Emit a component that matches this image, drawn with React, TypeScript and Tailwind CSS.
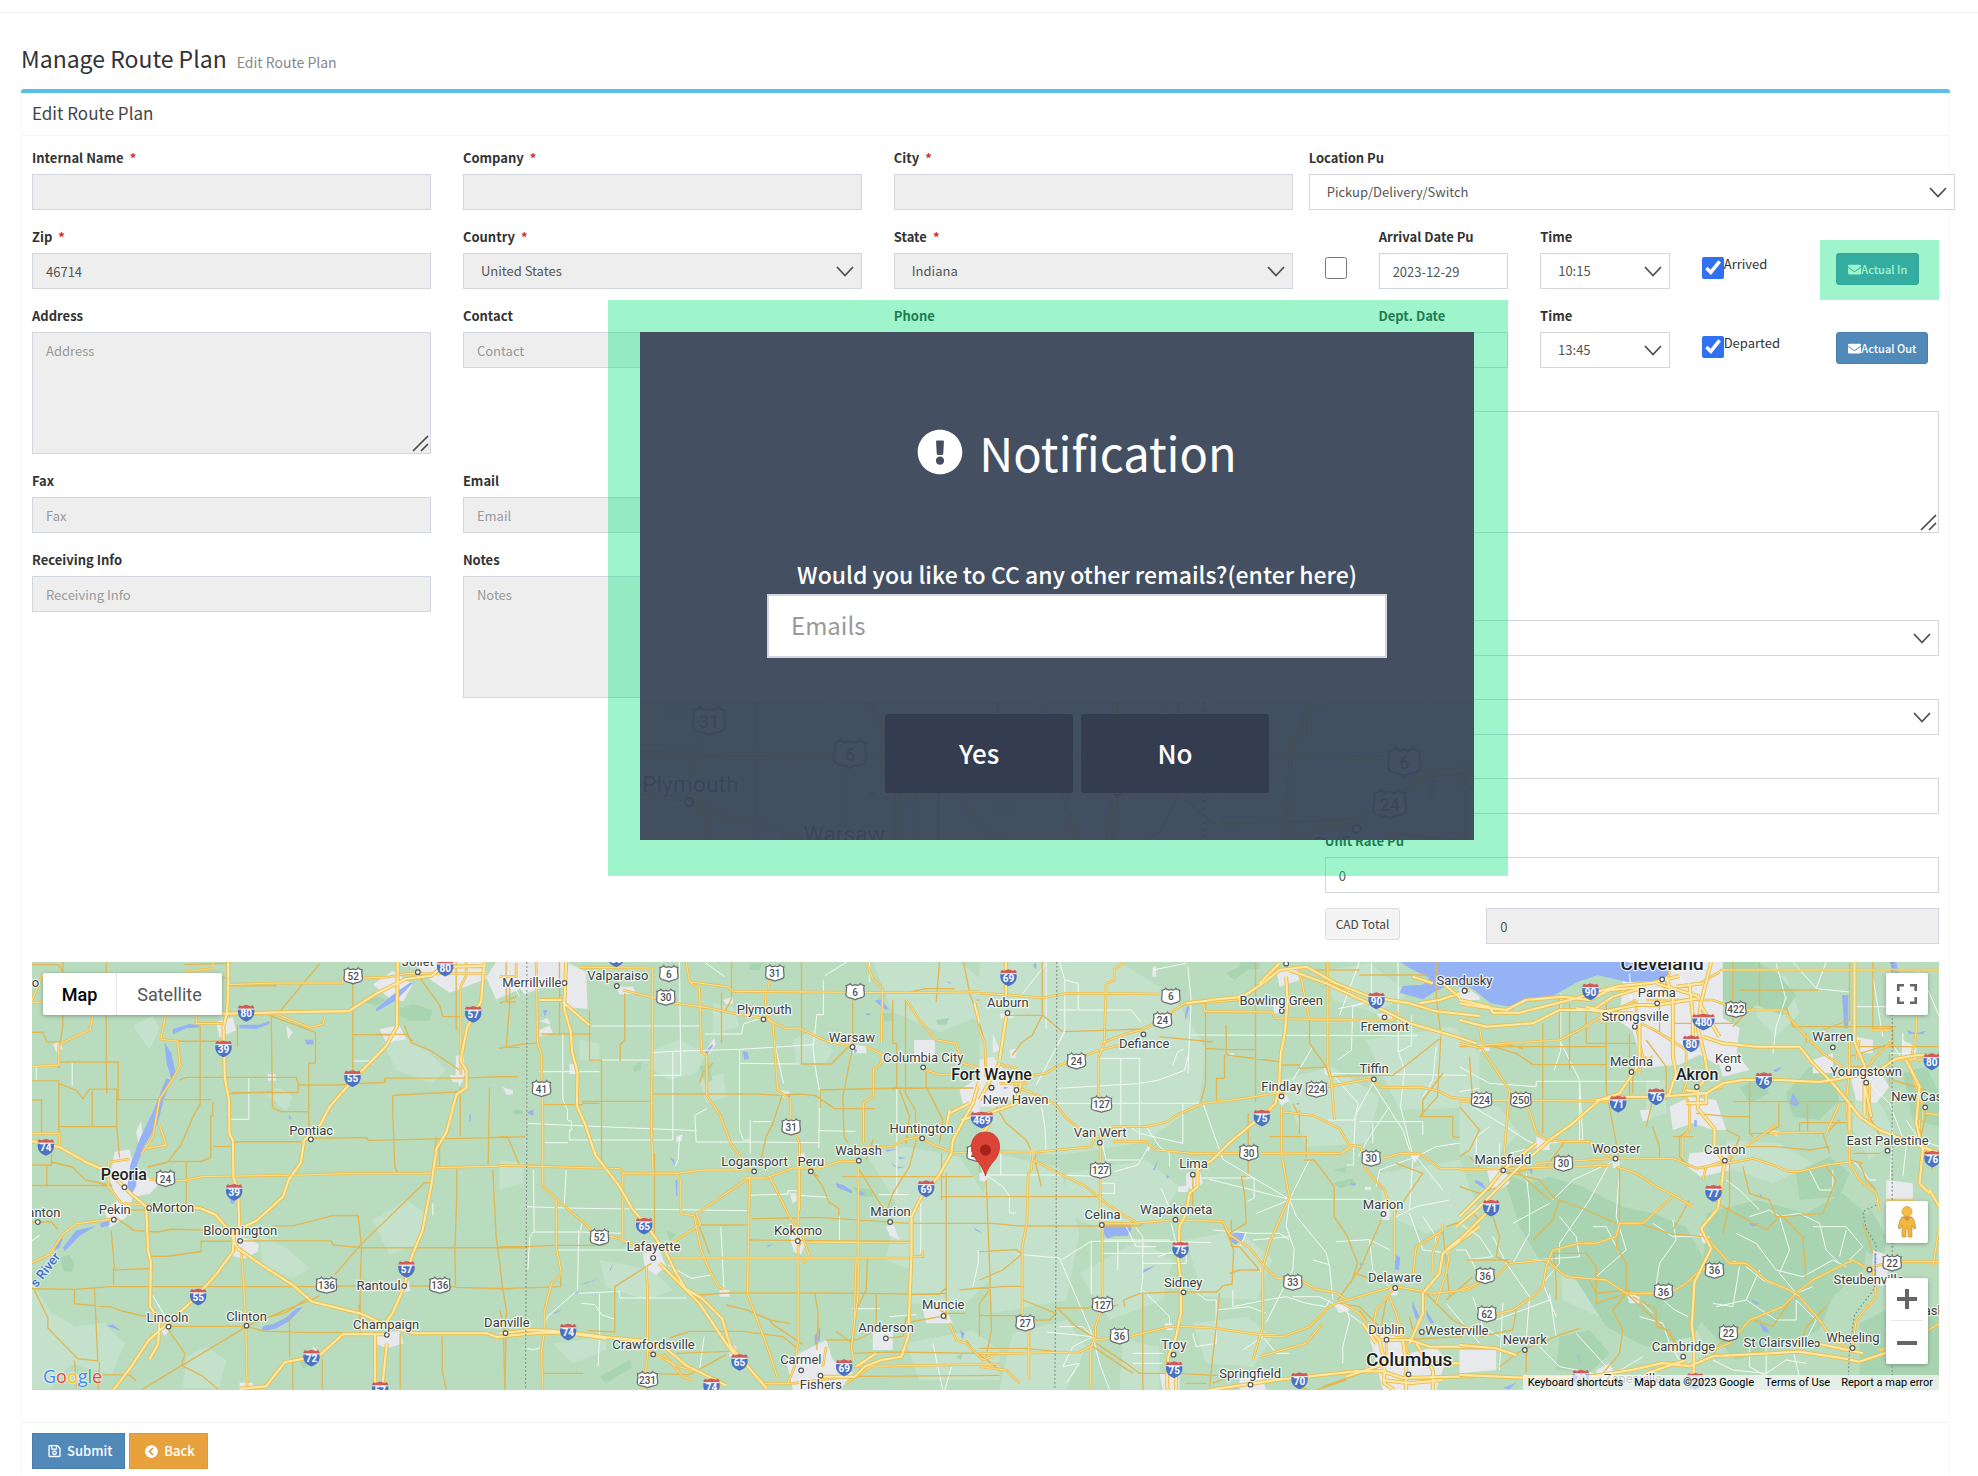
import React from 'react';
import { FaEnvelope, FaRegSave, FaChevronCircleLeft, FaExclamationCircle } from 'react-icons/fa';

const controlClass = 'block w-full border border-[#d2d6de] text-[13px] leading-5 text-[#555] placeholder:text-[#999] outline-none rounded-none';

interface FieldProps {
  id: string;
  label: string;
  required?: boolean;
  children: React.ReactNode;
}

const Field: React.FC<FieldProps> = ({ id, label, required, children }) => (
  <div className="mb-[15px]">
    <label htmlFor={id} className="block h-6 mb-1 text-[13px] leading-6 font-bold text-[#333] whitespace-nowrap">
      {label}
      {required && <span className="ml-[6px] text-[#c9302c]">*</span>}
    </label>
    {children}
  </div>
);

interface TextInputProps {
  id: string;
  value?: string;
  placeholder?: string;
  disabled?: boolean;
}

const TextInput: React.FC<TextInputProps> = ({ id, value, placeholder, disabled }) => (
  <input
    id={id}
    type="text"
    defaultValue={value}
    placeholder={placeholder}
    readOnly={disabled}
    className={`${controlClass} h-9 px-[13px] ${disabled ? 'bg-[#eee]' : 'bg-white'}`}
  />
);

const Select: React.FC<{ id: string; options: string[]; disabled?: boolean }> = ({ id, options, disabled }) => (
  <div className="relative">
    <select id={id} className={`${controlClass} h-9 appearance-none pl-[17px] pr-8 ${disabled ? 'bg-[#eee]' : 'bg-white'}`}>
      {options.map(option => (
        <option key={option}>{option}</option>
      ))}
    </select>
    <svg className="absolute right-2 top-[13px] w-[18px] h-[11px] pointer-events-none" viewBox="0 0 18 11" fill="none" stroke="#505050" strokeWidth="1.8">
      <path d="M1 1l8 8.5L17 1" />
    </svg>
  </div>
);

const TextArea: React.FC<TextInputProps> = ({ id, placeholder, disabled }) => (
  <div className="relative">
    <textarea
      id={id}
      placeholder={placeholder}
      readOnly={disabled}
      className={`${controlClass} h-[122px] resize-none px-[13px] py-2 ${disabled ? 'bg-[#eee]' : 'bg-white'}`}
    />
    <svg className="absolute right-[2px] bottom-[2px] w-[17px] h-[17px] pointer-events-none" viewBox="0 0 17 17" stroke="#444" strokeWidth="1.6">
      <path d="M1 16L16 1M9 16l7-7" />
    </svg>
  </div>
);

// ---- map data -------------------------------------------------------------
// Every tile keeps its own grid, `x`/`y` is its corner on the map and `sx`/`sy` the grid scale.
type Label = [text: string, x: number, y: number, size?: 'md' | 'lg'];
type Point = [x: number, y: number];

interface Tile {
  x: number;
  y: number;
  sx: number;
  sy: number;
  dark: string;
  light: string;
  urban: string;
  water: string;
  white: string;
  minor: string;
  medium: string;
  major: string;
  border: string;
  labels: Label[];
  dots: Point[];
  interstates: Label[];
  highways: Label[];
}

const tiles: Tile[] = [
  {
    x: -32, y: -22, sx: 1 / 3, sy: 1 / 2.925,
    dark: 'M1200 200l40-12 30 8 30 10-10 30-60 0-30-14zM180 930l30-10 15 30-10 22-22-4zM900 1235l30-8 5 14-25 12zM1090 180l40-16 30 10-30 20z',
    light: 'M96 1000l60 90 70 40 90-10 60 60-40 90-120-30-60 70-60 6zM560 1220l60-30 60 40-20 80h-110zM1150 300l60-20 70 40 60 60-40 40-110-40zM400 250l60-30 20 40-30 60zM780 860l80 40 70 60-50 30-90-40zM1120 820l100-60 60 40-20 90-90 30zM800 450l40-20 40 30-20 40z',
    urban: 'M345 620l45-8 10 40 40 40 40 20-30 30-50 10-20 60-50 30-15-50 40-30-25-60zM700 860l60 20 18 10-4 22-40 20-40-10zM1130 1150l70-6 12 36-50 14-30-12zM1120 130l60-40 60 40-30 50-40-10zM1240 64h220v50l-110 40-60-40zM1370 340l20-10 10 60-20 40-12-40zM1460 110l30-46h70v80l-70 30zM160 305l20-8 10 20-20 10zM805 392h24v20h-24zM650 240l50-15 10 40-50 20zM860 250l20 20-14 20zM1140 260l60-10 20 40-60 10zM1200 1000l28-4 4 30-24 6zM480 1140l24-20 10 14-18 24zM410 560l14-30 6 40-14 24zM720 1295h40v20h-40zM1350 395l30 0 10 20-30 0zM1510 430l30 10 0 12-20 0z',
    water: 'M495 300l20 30 14 60-12 20-16-50zM500 405l16 4-24 60-18 70-38 60-24 60-2 60-16 30-10-30 8-60 30-80 40-80zM520 260l50-14 30 4 0 6-40 2-40 18zM720 248l60 0 30-12 0 10-40 14-50-2zM916 292l26 0 0 14-20 0zM1130 200l50-40 50-34 10 0-50 50-60 34zM170 880l20-10-10 30-16 8zM190 900l40-50 60-14-50 30-44 44zM300 830l30-10 0 14-24 8zM790 1130l30-6 40-20 30-26 20-4-40 40-40 22-30 6-14 0zM320 1130l20-6 24 20-24-10zM692 755l16 0-4 16-10 0zM870 510l6 14-8 0zM1410 510h4v20h-4z',
    white: 'M218 360v66M110 370v40M748 402v122H690M1060 354h50l20-20M460 1040l36 60M96 880l24-16M1300 770v36M940 1190l14 16M1195 170v110l-70 60',
    minor: 'M96 72h80l20 30M320 64V350l2 100M96 270h34l12 28h40M190 64v190l-10 60-2 60M96 412h82v154M178 357h160l-6 0h24v110h280M96 468h30v100M180 420l50 20 20 24 20-28h82M278 440v106h-98M178 546h172M352 436v110l8 90M96 658h60v-38M96 718h240M142 660v60M158 650l60 14 40 38 80 16M602 250v230l-18 30-40 90-40 50-60 14M540 410l20-8h330l6 18v26H696M896 424h110l150-8 0-12h230l110-4 60 0M640 474v40h-6v122l-30 12-100 0M640 604h60M704 590l200 0M928 576V360h20V270l-140-50M940 580l160-2 8 8 470-10M1060 110v320M1060 276l110 2M1130 276h90l20 20M1215 250l20 50 60 24 90 60M1260 110l30 40 30 40 10 34h60M1340 224h40M1370 64v200M1382 430v144M1180 454l200-10M1180 454v60l6 150 10 20M690 450l130-6M815 210l4 280 26 12h84M714 250v64M828 136v-10h200M830 134H690M840 210l120-140M555 72l140-4M550 110h140M525 296h145M1530 64v130l-10 120h40M1470 430l-4 226M1310 576l-10 90M1320 580v90M1480 670l10 200 10 70 8 70 14 80-10 60 4 160M1372 670v80l-6 160 2 100M1368 1016l150 4 20 0M96 1020l130 2 110-8h620M1010 1012h70M1230 1012h60M1350 1014h20M225 1020v44l110 10 36 12 70 16 10-6M342 960v50M345 965l110-4M335 850l10 110M345 810l60 40 70 4 40-8 170 4M370 790h70M455 925h50l100-14v-30h90M730 880h265l6 12 84 8 280 0h220M820 836h60l120-30h70l6 0 10 90-4 120 0 130-4-80M1085 890l-80 90M1085 890l190-180h20M560 650v145M560 712v-14M96 825h60l20 22M105 1025l40 80 0 30 50 50 40 40 60 6-10-210M225 1230l6 80M300 1235l-4 80M310 1272h80l20 18M510 1130h230l200-80 20-10M500 1130l56 80-10 34 60 30 50 40M556 1240l180-106M740 1130l50 14 130 4h110M870 1100l0 50 0 70M880 1235v80M968 1225v90M1202 1150v165M1328 1160v100l12 54M560 1236l-140 84M780 1110l80-20 60-40M1385 280l0 0M1390 1270',
    medium: 'M725 900l8 120 6 100 4 190M130 100l-34 80M96 182l34 0M96 370l82-4v-60l94-44 10-50M96 566h84v40M500 210l-16 80 50 6 8 70-22 40-40 60-20 110-34 50M480 540l20 60-60 10M96 944l54-24 40-60 40-30 110-14M326 650l0 70 40 50 60 4 60 14M330 650l60-10M450 700l100 4 60-12 270-4 190-6h220l20-16 250-6M690 130l140-4 200 0 0-12 140-6 50-10 240 0M670 220l160-4 100 40 40-10 6-20M590 210v34h80M1400 64v40l-16 30v260M640 64v20l-80 8',
    major: 'M686 64v100l-4 50-10 40 4 150 12 60 2 104 10 18 2 110 14 40 4 120M668 216l150-4 230-4 80-50 90-44 80-10 30-26 130-2M1195 64l-3 190-32 56-80 80-40 42-50 56-26 50-50 48-10 66-36 48-18 52-34 30-46 40-66 30-4 60-50 66-66 72-60 54-76 66-50 74-62 80M96 588l84 18 80 44 70 30 66 64 44 36 160 4 46 18 44 48 24 52 90 60 74 46 60 50 150 36 74 34 80 22h220l30 12 60-10M1455 64l-10 116-42 76-20 96 18 30 0 50-30 20-30 110-30 48-16 110-26 130-34 80-20 82-36 80-30 40M1127 1150v164M1162 1180l-14 134M1160 1153h-130l-70 62-104 20-56 70-80 8M440 780l6 130 8 30-2 132 28 40-4 70-26 44',
    border: '',
    labels: [['Joliet', 1255, 77], ['Pontiac', 935, 569], ['Peoria', 373, 702, 'md'], ['Pekin', 346, 802], ['Morton', 521, 797], ['Bloomington', 722, 863], ['anton', 133, 809], ['Rantoul', 1137, 1025], ['Lincoln', 504, 1116], ['Clinton', 741, 1113], ['Champaign', 1160, 1138], ['o', 108, 138]],
    dots: [[1255, 94], [934, 583], [375, 723], [343, 818], [449, 784], [722, 880], [115, 825], [1214, 1012], [507, 1131], [741, 1128], [1162, 1155], [1518, 1150]],
    interstates: [['80', 1337, 82], ['57', 1421, 217], ['80', 740, 214], ['39', 672, 318], ['55', 1059, 405], ['74', 139, 606], ['39', 704, 738], ['57', 1221, 963], ['55', 596, 1044], ['72', 936, 1223], ['57', 1142, 1316]],
    highways: [['52', 1061, 105], ['24', 498, 698], ['136', 981, 1010], ['136', 1321, 1010]],
  },
  {
    x: 468, y: -22, sx: 1 / 3, sy: 1 / 3,
    dark: 'M600 380l30-10 8 50-20 14zM1310 240l40-6-10 20-24 0zM1150 220l30 0 0 24-24 0zM60 140l40-70 20 20-10 60-50 10zM40 510h30v12H40zM400 380l24-14 0 24-20 6zM300 1310l90-50 10 20-80 50zM500 870l30 14-20 20zM1370 1250l20-10-6 20zM1060 740l60 10 0 20-40 0zM750 70h40l-10 20h-30z',
    light: 'M460 330l80-30 80 40-30 60-80 20-50-30zM240 300l60 10 0 50-60 0zM1120 66h260l100 80 20 120-80-30-100 40-140-60zM1100 640l120-20 160 30 80 120-60 180-110 60-130-50 30-170zM1250 860l180-60 60 200-100 100-160-10zM1220 1210l200-40 80 60v90h-240zM880 300l60-30 60 60-20 40-90 0zM640 190l60 10 20 60-80 20zM600 420l70-20 10 70-60 20zM160 1210l160-20 0 40-100 40zM0 660l70 10v60l-70 20zM300 960l160 30 60 60-80 30-120-40z',
    urban: 'M0 66h200l60 30 4 110-60-4-10-60-60 0-60 20-34-40-40-10zM120 270l30-14 10 24-40 10zM120 244l24-10 10 20zM210 372h20v30h-20zM350 140l50 0 10 20-50 4zM1244 300h62v60h-62zM1380 450l60-40 20-60 40-8v120l-70 60-40-30zM430 940l50-10 20 50-30 24-34-20zM870 890l40-10 8 30-14 34-20-8zM1160 860l20-10 20 50-30-14zM1270 1110l60-20 30 60-80 0zM1120 1180l60-10 0 60-60 0zM860 1260l120-60 20 60 60 40-40 50h-140zM690 1210l20 10 4 30-24 0zM1440 700l24-6 4 30-24 0zM1050 310l50 10 0 20-40 0zM840 450l30 6-10 20-20-10zM620 330l24-36 4 20-20 30zM660 1050l30 0 0 20-30 0zM530 590l20-8-4 20-16 4zM670 180l30-10 0 20-20 4zM900 640l16 0 0 30-16 0zM870 760l20 0 6 20-16 10zM1020 160z',
    water: 'M130 210h14l-8 20zM618 334l18-20 6 0-20 32zM730 334l14 2 4 20-14 4zM1125 182l20-4 22 28-8 4zM1060 318l14 14-8 8zM82 518l20-10 0 20zM510 650l14 10 4 20zM528 720l6 0 0 48-4 0zM1010 730l20 4 30 20-4 6-44-18zM1070 748l30 14-20 4zM1382 1170l14 10-8 20zM945 1190l18-30-2 40-14 16zM220 1060l16-12-4 12zM240 1035l60-20-40 16zM160 1120l30-14-20 14zM1160 630l40-4-40 10zM1196 650l24 4-20 4zM1420 860l30 20-20-8zM860 460l14 8-6 6zM1100 220h12v6h-12zM1340 122l18 8-10 0zM330 990l10-20-6 20zM802 916l20-4-16 8zM1170 660l16 20 30 0-20 6zM502 1160l-8 30',
    white: 'M190 280v200l14 30v30l12 4v26h-6l0 30h310l0 0V334M82 550l130 6 380 16M135 608l70 0M590 606l170 0M540 66l4 340-90 0M456 338l66-4 200-6 130-8 90-6 10-90 20 0V120M616 282h110l6-30 60-20M720 330v240l12 30 20 0M720 370l180 2M760 545l54 0M752 540v100M760 606l198 2M975 108l110-70M615 66l60 44M940 314l6 60 14 80-2 170M958 572l110 2M1192 445v320M1138 764h90M1264 780v160M822 280l10 60 20 90M200 690l-6 108M102 690l2 184M82 800l120 4 120 2 420 6M745 766l120-4 0-10 26 0 6 14 90 6M85 990l6-100 10-14h145l124 4M238 870l-4 180-90 80-10 26M240 1060l120-6 0 20h200M456 930h-280M300 1060v130l-4 90M246 1090l40 4 20 30 40 14M82 1225l20 4 20-6M600 1290l14-100M664 860l10 200M505 975l70 40 60-10M1056 1106h86M1436 930l0 40-16 70M1020 830l0 80M590 606l-4-80 36-20M540 590l-4 70-10 20M1300 1210l30 140M1110 66v60M1466 66v80M270 360h180M120 395h180M276 258h330M1170 1130l80-6M1356 1280l-20 70M20 90l40 80M246 850l-2 20',
    minor: 'M0 325l60-12 60-4M270 210v150h36v320M456 462h320l60 4 60-4 50 4 60 40 120 0M300 490h-50v-6h200M130 494h120M124 282h150M180 66v220M376 160v140l-14 14v50M666 160l0 150M696 66l0 110-20 40M780 680l20-90 20-40 30-90M600 430l10-30 30-30M1180 180v130h12v130l-14 10M1190 445h80M962 450l240-6h220M962 450v54M906 66v306l90 0 50-50M1060 180v130M1060 320l-30 150 4 120 12 20M1218 180v280l30 50 0 80M1280 390v50l50 100-10 70M1392 66l20 100 40 100 10 100M1320 66l-10 120M1430 180l20 0 4 30h46M1216 160l60-14 90 0M1200 450l30 80-10 80M1500 490l-60 90v120M958 710l-20-14 30 40 20 50 30 20 0 20M1030 710l250 0 140 0M1326 640v140M1326 770h170M1240 850h260M1100 660l20-60M1080 690l80 130 0 0 20-60 50-80 20-80M758 836l200-4 270 18M750 900l480 4M740 855h-140M896 960v-40l10-10M810 1140l60 10M600 860l30 80M600 1065l80-6h300l340 4 20-20M680 1095l60 14 70 30 10 14 90 60M600 1080l-10-10M946 1060l10 60-4 110M1104 950l-4 100-30 60-10 100-50-36M1130 1060l0 90-20 20M1340 700v440M1342 1060l-110 4M1380 1050l60-6h60M1300 1100l40 20 60 0M1232 1146l90-16M1400 1200l20 30 70 50M1160 1195l50-6 10-60M1060 1240l110-4 280 4M980 1200l90 0 50-24M900 1230l-50-40-120-16h-160l-60 20M530 1240l160-6M460 920l-90-10M0 920h80l90-4h150M184 1010l0 30-184 6M346 1036v140l-80-4M346 1040l110-70M0 590h24l36 84M80 675l220 10M20 66v120l30 0M0 190l50-20M460 560v0M465 640v240M1000 1310l500-4M0 1110l20 70-4 170M250 1300l-120 0M450 1300l120 4 110-60M1500 1010l-60 80 0 100M956 1140v50',
    medium: 'M0 110h50v-40M240 82l220 2-4 480 4 120M560 66l10 60 30 20 6 190 16 10 0 120 40 60 30 80 60 90M370 150l80 20 80 20 100 14 60 14 50 8 60 10 60 30 40 0 80 36 60 14 10 0M1100 320l50 24-8 30-20 14v80l-30 20 0 120M572 126l110 14 20 14 470 4 100 0 240-4M800 140l-4 80 24 30 6 80 8 120 40 30 0 70 26 60v200M826 80l-20 60M1220 180l40 60 50 60 60 10 20 60 70 20M1100 66l20 50 30 30-4 120 0 40M1280 390l40 14 40 0M110 66l4 240 12 40 4 200v190l40 40 80 70 30 30 0 0 80 20 50 20M170 780l0 140 16 80-30 30-20 80 0 60-10 60 4 140M0 676l360 10 10 10 0 210M370 700h160l80-10 120 0M530 700l14 20 0 100 40 8 20 100 20 50 30 60 20 10M730 714h70l80-30h80l60-20 60 0M750 712l-160 110 14 30-60 40-50 30M810 710l60 120 40 60 20 60-20 20M750 712l-6 350 60 160 30 90M896 690v260l0 260M1080 624l100-4 30-20 50-10 40 24 60 24h50M1076 680v280l0 100-20 160 6 40M1070 906h-130M925 908l140 0h160M500 954h640l100 0M1070 955l-6 180M1240 950h30v-20M440 980l4 70 0 200-14 100M445 1230l90 50 60 14M490 1240l60 70 30 10M895 1210l-10 70-20 50M980 1220l-10 60M780 1330h100l160-20M1350 1150l20 50 30 10 50 50 50-20M1060 1280l440-8 0 0M1460 1270l40 20M1130 1270l-90 60',
    major: 'M200 66l-6 140 20 70 4 60 16 60-2 100 26 60 30 90 70 90 40 70 50 60 50 70 30 60 30 50 50 30 60 60 24 80 50 60 60 70M480 970l120 120 80 120 30 40M0 190v0M190 186l80 70M120 180h66M0 1190l120-12 100 0 100 14 110 10 70 24 60 50 120 60M0 1180l90-10 70 2 160 24M1500 440l-60-20-20 70-60 110-4 40-40 70-50 60-30 60v110l-10 250-20 60-60 10-50 20-30 30h-110M1350 520l60-30M1340 570l10-60M1459 410l-8-120-26-100M1385 540l70-20 30-10M1070 1280l60-40M1459 560v0',
    border: 'M82 66V560l-4 790',
    labels: [['Merrillville', 97, 140], ['Valparaiso', 355, 121], ['Plymouth', 794, 221], ['Warsaw', 1057, 305], ['Columbia City', 1271, 366], ['Huntington', 1266, 578], ['Wabash', 1077, 645], ['Logansport', 765, 677], ['Peru', 934, 677], ['Marion', 1173, 829], ['Kokomo', 896, 886], ['Lafayette', 462, 934], ['Danville', 22, 1162], ['Muncie', 1331, 1108], ['Anderson', 1160, 1175], ['Crawfordsville', 462, 1226], ['Carmel', 904, 1271], ['Fishers', 964, 1347]],
    dots: [[195, 129], [352, 138], [792, 238], [1059, 321], [1271, 382], [1476, 443], [1268, 595], [1078, 662], [764, 694], [934, 694], [1172, 846], [895, 903], [461, 954], [1332, 1128], [1159, 1195], [461, 1243], [905, 1291], [963, 1307]],
    interstates: [['80', 350, 56], ['65', 434, 858], ['469', 1447, 540], ['69', 1280, 746], ['74', 206, 1176], ['65', 720, 1267], ['69', 1034, 1283], ['74', 636, 1340]],
    highways: [['6', 508, 101], ['31', 826, 99], ['30', 499, 172], ['6', 1067, 155], ['41', 126, 446], ['31', 875, 561], ['24', 1430, 640], ['52', 300, 892], ['231', 444, 1319]],
  },
  {
    x: 948, y: -22, sx: 1 / 3, sy: 1 / 3,
    dark: 'M740 100l60-30 4 20-40 30zM1060 730l60-16 10 20-50 10zM780 66h60v20l-60 6zM1200 1250l0-60 30 0zM1060 690l40-10 0 20zM700 120z',
    light: 'M0 66h420l160 100 100 160-20 160-160 120-260 40L0 620zM40 640l200 40 60 200-40 200-220 40-40-300zM260 700l240-40 100 80-60 100-160 40-120-60zM300 1000l180-100 100 60-30 120-160 60zM620 900l160-30 100 90-50 120-160-10zM900 420l160-40 140 90-40 140-180 10zM1160 300l260-40 80 80v160l-240 10zM1200 700l240-40 60 160-160 60-130-60zM100 1180l160-40 60 80-60 130H60zM640 1150l160-20 80 60-60 90-140-10zM1040 90l130-20 120 90-100 60-130-40zM430 1200l110 20 0 130h-120z',
    urban: 'M0 360l40-10 50 60 20 60-60 30-50 0zM40 340l0-60 20 50zM62 220h40v14H62zM890 90l60-10 10 40-60 20zM880 190l40 0 0 30-36 0zM890 470l30-8 10 20-24 14zM620 700l40-10 10 40-30 20-20-10zM596 740l30-4 0 20-30 0zM1170 1190l100-10 20 60 80-20 30 40-30 90h-160zM1190 220l50 0 10 14-40 14zM1200 810l30 0 0 30-20 0zM1060 1090l40 0 10 20-30 10zM830 980l24 6-6 14zM780 1310l60-20 20 60h-80zM1290 640l30 6-14 24zM150 630l20 0-4 16-14 0zM520 80l10 0 0 30-12 0zM1460 140l40 30v10h-34zM750 340h14v10h-14zM1034 380l18 8-4 20-14-8zM354 600l20 0 0 24-16 0zM1156 740h18v10h-18zM555 1150l24 0 0 20-20 0zM540 1300l60 0 0 50h-50zM90 330l24-6-6 30-14 0zM500 620l12 0-4 16zM0 700l20 4 0 14-20 4zM1230 1040l24 6 0 20-20 0zM0 480z',
    water: 'M1264 66H1500v66l-60 10-20-14-60 30-30 20-70-20 10-20 60-4 20-20-60-30zM372 860l40-6h40l4 14-12 20-40 0-20 8-10-14zM750 884l24-8 20 4-4 20-24 14-12-12zM490 990l40-14-20 12-20 12zM1248 945l14 6-4 40-12-4zM1300 1080l6 20 14 30-10 10-12-40zM1340 1110l24 40-12 0-10-20zM1486 720l14 4v10l-12-4zM560 706l10 4-8 6zM1114 728l14 0 0 8-12 0zM616 230l6-30 8 0-12 40zM70 440l16 2-10 6zM160 76l10-8 0 20zM950 490l10 0-6 6zM1140 968l14 4-10 8zM520 690l16-30-10 30zM345 990l4 20z',
    white: 'M256 120v150l-20 40M256 275l-86 160M130 160l70-90M240 66l16 54 40 10 0 80h160l30 40M200 66l0 200M232 210h60M360 355h120M424 355v210M480 355v240M235 445l240-14 60-10 80-30 10-40M200 490h140l320 0M625 400l10-220-10-100M580 376l14-40 20-10M520 90l100-20M635 285l680 2M1140 66l-60 160M1176 66l0 120-100 20M1256 66l0 270 40-20 0-90M1190 170l-70 30-4 130-40 30M1060 400l400 6M1000 320l-60 100M1056 400l80 90-10 50-80 0M1188 415l-60 110-6 110 0 40-20 0M1160 400l110 170 20 60M1255 330l20 60-12 110 40 160M1330 470l30-50 10-100M1230 500l-60 90-34 60M1140 545l190 0 0 40M1180 550v60M930 778l60-120M930 778l230 0 20 10M930 778l-200-120-60-170M930 778l-240-60M930 778l20 50 90 110 10 40 10 100M930 778l-10 80 24 70-4 60-80 160M830 820l100-40M664 714h140l20 0 0 60-20 10M610 490v120l-130-30-30-20M500 560l40 60 30 20 0 40M505 625l-30 50-70 20M370 620l10 40 100 0M20 705h210l130 4M20 705l50 34 20 30 0 50h20M40 640l24 0 0 66M200 640l-4-80-10-60M365 730h40l0 30h-40M545 745l34 80M460 850l30 40 0 120-6 50M130 944l110 10 90 210 10 30M245 960l90-56 240 0 120 4M335 904v160M370 940h250l0 30-130 0M370 900h200M575 850l20 80-60 20M415 900v90M440 860l30 60 60 0M490 1050l80 80 0 30M340 1190l-60 30-30 60 50-10-40 60M340 1190l-30-30-70 0M340 1190l20 80 30 80M340 1190l-140-14M640 1050l40 30 30 0 0 130-60 10-10-40M710 1110l100-10 50 20M760 1050l0 50 100-20M860 1080l60-10 60 20 60 10 10-20M850 1190l-60 40M850 1190l40 50 40 0M1000 960l50 14M1070 905l100-6 60 30M1250 830l60-30 100-20M1330 830l40 60-10 60M1170 900l10 90 60 60M1080 1100l80 60M1100 1100l10 40-20 80 0 50M1080 1100l-60-30-80 0M1400 1090l100 120M1290 820l40 110 80 10M1430 930l30 0 30 60M1310 650l80 100M1310 650l-110 40-10 50M1310 650l60-30 130-20M1300 660l-10 150M700 870l120 10 80 0 30 20M820 900l110-10M780 920l20-40M460 1270l20 0 70 0M460 1240h90M0 700z',
    minor: 'M0 250l16 60M16 310v100M188 66v160l-30 60-30 20-30 40M80 240l0-14h110l60 50M256 275l120-4 110-4M540 290l160 16M678 190v245l-14 50M678 325l60 4 90 0M740 255v90M740 345l160 20 0 10 60 0 0 10M828 66v420M735 345l0 70-24 0 0 70M990 240v70l50 70 10 30M960 385l80-4M1050 410l130-4h60l40-30 100-80M1040 66l0 70 60 10M1140 105h200M1010 90h130M1370 66v100l14 120M1384 290l-10 180-54 60h100l0 60 80 10M1330 530v-50l60-80M50 500l30 50 60 50 14 30M170 640l-4 20 20 80M0 770h360M20 720l10 250 6 200-16 80M0 850h40l80 8h250l110 0 10-10M0 935l110-6 20 14M130 940l-60 50-70 30M0 1045l80-6 54 0M0 1127h120M150 1140h60l20-20-100-40M230 1104l100 0 30-20M230 1100l60 60 50 30M150 1170l0 60M0 1225l140 0 90 10M350 1210l90 60 40 30 80 0M340 1220l120 80M365 1105l50-10M436 1100l-4-20 50-20 100-4 130 0 20-20 26-4 4-100-10-40M490 1060l0 290M720 1060l-10 100-20 180M755 840v80M730 850l30 70 20 0 60 70-60 0-30 10M800 710l-14 0 10 60 4 80-50 30M806 520v180M870 590h110v60M984 660l-10 0 30 0 60 80 0 90 40 60 30 80-20 60 0 0M1125 1000l60 20M940 490l20 40M960 580l0-70M1240 830l90-130-80-30M1205 840l-60 140-70 100M1080 1090l60 10 60 60M1390 870l20 200M1240 1040l100 20 40 40M1360 1080l60 60 80 40M1220 1080l-20 110M1030 1340l200-70M1010 1350l90-30M990 1350l-40-10M1140 1110l20 30M1290 1130l10 40M1480 1010l-80 70M1480 820l20 20M1400 860l60-20M1250 1200l200-10M600 1300l100 6 60 0M620 1330h60M750 1310l-50 20M640 700l0 110M0 870',
    medium: 'M0 160l80 4 110 10 70-14 120 0 160 2M380 130l-6 180-16 40-2 110 10 30M380 130l24-8 0-34 30-20M0 270l16 40 4 100M80 110v60M364 310l80-30 40-10 60-30 70-50 90-4 90-8M130 410l70-10 30-20 130-50 60-14M60 430l80 0 0-20 20 0M50 370l60 14 10 60 50 20 60 30 30 40 50 40M55 636h120l160-16 10-30 16 0M360 600l40-40 100 0 60-14 30-20 80-36 90-10 130-20 30 0M400 604l100 0 30 26 110 10 150 0M845 640h240l30-24 30 4 10 60 30 40 30 30 10 30 20 20 0 160M1090 640l30-24M1210 655l50-14h60l30 20 30 24 120 0M1045 440l130-24 30 26h120l50 10 40 20 80 8M1045 66l0 314 10 40 10 120M906 500l0 140 10 60 14 70-60 140-20 70 0 180-30 100M910 516l90 10 80 40 30 50M672 190l4 24 200 2 14 20 250 4 100 0 16-24M960 90l30 150M160 630l-4 60-10 10-4 150-14 70 0 210 20 40 0 150M160 660l80 40 80 40 60 50 60 40 30 16M362 610v80l0 160M368 850v250M368 1100l-20 60 0 30-14 30v130M370 850l90 0 120-10 150 4 20 40 60 40 50 60 30 30 80 10 40 24 60 10 30 20M340 1200l110-10 120-30 50 0 80 4 140 20 50 0M850 1190l60 0 80-30 60-60 20-10M1070 1090l170-50M1240 1050l-50 60-10 60M1090 1090l50 30 30 40M1170 1170l100 20M1230 1070l20 50 20 70M0 1240h100l200-4 40-20M0 1280l80 10 40 40M1220 1190l0 80M1270 1190l20 60M1370 1090l30-90 10-60M1500 1030l-40 20-100 10-110-20M1300 1010l10-90 80-50 0-20M1380 880l-20 60 0 60M840 1250l140-40 50-60',
    major: 'M920 110l4 70-8 100-12 60-6 110-10 40-40 40-40 30-60 50-50 50-44 30v50l-24 20-10 60-20 40-4 100 8 60 0 100-14 70-24 60-4 90 14 30 0 40M590 1310v40M690 180l100-10 60-40 50-40 80-10 90 50 100 40 120 20 80 24 130 14M620 190l80-10M930 90l110 40 130 60 120 60 140 40 60 20M1320 190l60-10 90-30M840 130l60-60M1300 110l60 20M1500 860l-110 80-10 60-50 60 0 60-40 90M1500 840l-40 40-60 50M690 1350l200-30 240-26 80 0 60 20 230-6M1100 1310l120-40 280 0M1170 1170l30 30 14 60 0 70 30 20M1270 1200l10 70 0 80M1200 1200l90 0 60 20 150 0M1310 1210l50 80 0 60M1210 1320l80 10 100-10M80 66v100M80 230l-20 130M60 370l-60 110M30 550l-20 30M0 530l110-40 14-60M1150 1150l40 60M10 570v20M1390 130l60 50 50 20',
    border: 'M232 66L230 900 226 1350',
    labels: [['Auburn', 85, 201], ['Fort Wayne', 36, 421, 'md'], ['New Haven', 108, 491], ['Defiance', 494, 324], ['Van Wert', 362, 590], ['Bowling Green', 905, 195], ['Fremont', 1216, 272], ['Tiffin', 1184, 400], ['Findlay', 907, 452], ['Lima', 642, 684], ['Celina', 369, 838], ['Wapakoneta', 590, 821], ['Marion', 1211, 806], ['Sidney', 611, 1040], ['Delaware', 1246, 1027], ['Troy', 583, 1226], ['Dublin', 1221, 1182], ['Columbus', 1289, 1277, 'lg'], ['Springfield', 812, 1313]],
    dots: [[84, 219], [36, 443], [111, 450], [492, 283], [361, 608], [907, 213], [920, 71], [1215, 232], [1183, 418], [906, 469], [640, 704], [367, 855], [588, 839], [1212, 822], [612, 1057], [1247, 1044], [582, 1244], [1221, 1199], [1327, 1176], [1287, 1303], [813, 1334], [1456, 152]],
    interstates: [['69', 87, 113], ['90', 1191, 182], ['75', 847, 534], ['75', 603, 930], ['75', 584, 1289], ['70', 960, 1322]],
    highways: [['6', 574, 169], ['24', 549, 241], ['24', 291, 363], ['127', 366, 493], ['127', 363, 691], ['224', 1011, 448], ['30', 808, 638], ['30', 1175, 655], ['33', 940, 1027], ['127', 369, 1094], ['36', 420, 1188], ['27', 137, 1149]],
  },
  {
    x: 1428, y: -22, sx: 1 / 3, sy: 1 / 3,
    dark: 'M780 66h110l60 30 60 70-40 60-80-30-50 30-60-60zM130 700l80 30 60-20 100 30 120 60 90 20 100 40 60 110 20 120-60 100-140 30-120-60-90-140-110-60-60-100zM740 820l150-40 150 40 110-60 90 80-30 150-90 80-40 100-120 50-130 40-110-120 10-160zM1010 700l100-50 60 50-30 70-120 10zM1050 380l70 20 20 80-60 60-80-10-20-70zM1200 1150l120-60 120 20v240h-240zM840 440l60-20 30 40-60 30zM300 1190l90-20 60 70-60 60-100-10zM1330 400l70-20 40 80v100l-80-20zM1230 800l50 90-10 90-60-60z',
    light: 'M0 480l120 20 60 80-80 80-100-20zM300 900l100 40 90 100-50 100-130-60zM560 420l60 0 0 100-60 20zM800 600l160 10 100 60-120 60-140-50zM900 90l80 20 40 110-70 70-60-60zM1190 440l80 60 40 100-80 60-50-90zM620 1100l80 40 40 100-70 40-50-70z',
    urban: 'M490 120l110-30 130-26h60v170l50 30-10 90-60 20-50-30-60 30-110 10-30-110-40-30zM630 500l60-30 80 10 30 90-40 0-60-20-60 20zM690 640l110-10 14 60-90 20-40-30zM1170 400l80-20 40 60-40 50-60-10zM1060 360l60-20 0 60-60 0zM1190 290l50 10 0 40-40 0zM80 680l60 0 10 50-50 30zM0 140l50 30-20 20-30-10zM0 1230h110v60l-110 10zM1280 720l80 10 0 60-80-10zM1240 930l60 20-30 90-30-20zM230 590l40 10 0 30-40 0zM540 510l30 0 0 30-20 4zM770 340l60 0 40 50-80 20zM60 310l30 4 0 20-30 0zM1330 300l40 20 0 40-40 0zM500 1060l40 10 0 20-30 0zM410 1290l40-20 20 40-50 20zM720 880l30 10 0 20-20 0zM930 570l30 4-10 16zM460 660l20 0 0 24-20 0z',
    water: 'M0 66h500l120 20 14 14-30 24-100 2-90-20-60 20-70 40-60 14-70 20-60-10-50-40-40-20zM1148 165h18v100l-12 0zM1290 66h20l10 40-10 0zM1000 460l20 30-10 10-20-10zM940 390l30-10-20 16zM704 540l8 0 0 20-8 0zM208 690l10-6 0 20zM50 720l20 10 10 20-24-16zM870 850l30 0-20 10zM900 760l10 10-8 2zM870 1076l30 14-10 4zM1230 520l10 10-8 8zM1340 270l30 10 30-8-10 10-40 0zM700 1190l20 30-10 0zM900 1150l20 10 10 20-20-6zM350 1240l14 30-6-20zM1244 940h6v70h-6zM130 1344l40-16-20 20z',
    white: 'M304 160v170l-20 60M0 380l90 50 140 10 0-16h370M300 300l60 120 0 180M0 455l60-10M40 500l100 60 60 40 40 20M360 420l10 180-110 10M200 700l10 90 0 90-50 90M470 660l-130 60-60 60M450 670l-60 110-90 130 0 60-50 60 40 100M480 690l-10 140 30 100-90 80M0 850l60 40 40 60-80 10M100 890l40 80 70 100-10 130M220 960l140-10-10-60-50-60M270 1060l20 130M110 1140l160-60M400 860l40 0 40 80M640 840l10 60-50 70-14 90 60 50 40 20M520 1060l60 60M540 1130l70 20 20 60 30 50M720 890l-80 0-60-40M830 880l60 30 60 80 80 20 90-50 40 20M870 830l60-20 30 20 30 100-30 70 50 60 50-20M960 830l60-10 60 30 20 80 40 40M800 720l40 30 60 60M840 980l-20 120-60-10M900 990l-40 90-90 20M860 1080l90 60 60 0 0-60 60 60-40 80M1010 1060l-100-40-50-40M760 1260l60 30 100 10 60-40 60 10M870 1200l0 80 70 40M920 1220l0 100M1000 1230l20 80 60 20M1060 860l100 0 50 60-40 40M1160 870l-20 80M1050 690l30 60 40 0 0-60M1180 660l50 60 20 0M940 340l10-80 30-90M980 180l-30-110M1000 66l80 90M1100 66l-30 80 100 10M1240 110l30 180M1190 200l90 0 30-80M1290 300l40 60 0-80M1290 340l60 0M1230 430l60 60 50 130-10 90M1340 540l40 60 60 20M1300 560l-10 200M1410 160l30 70M1370 90l40 70M640 66l40 80M520 240l-10-140M90 560l-40 30 0 60M120 690v-80M150 640l80-20M160 850l110-60M120 1290l10-200M40 1070l30 90 50 30M350 1180l100 110M240 1220l60 60 100 20M450 1310l100-60',
    minor: 'M250 250v330M440 180v270l40 210M0 320h60l380 0M100 320l70 20 50 34h220M80 320l50-10 60 16M300 300l0-130M330 190v200M380 200v110h150M510 280v200M520 400l0 60M560 300l60 80 0 100M600 200v80M640 250h180M820 66v180M880 200l-60 60M840 150h240M870 420v160l10 10M870 580h220M1020 548h150M1044 490v90M958 490v70l-40 20M1020 550v30M820 485h360M900 66l0 130M1000 260h190M1040 280l0 30M1090 270l80-30 0-170M1000 260l-20-60M1240 66v200l60 0 0 60M1190 260h120M1200 320l240 0M1170 380h60M1170 350l130-40M560 560l20-80M580 560l20 60 0 40M480 680l0 160M640 590l60 0M660 590l0 60 30 30M690 570l-30 20M710 520l100 10 60 0M800 570l40 20-30 80 0 120-20 90M850 680l20 80 60 20 20 50 20 0 120-10 40-100-30-40M960 830l-40 40-130-70-40-30M970 830l60 60 10 130M810 620l60 0 80 0 100 10 0 0 60-10M1090 580l20 60M1100 580l40-40M300 780l-20 60-60 60M300 780l80 30 90 40M270 780l-100-90-30-30M0 740l60 20 60-20M120 690l120 30 50 60M100 830l20 60-10 60 40 20M480 860l-10 60 30 50 0 80M500 1060l-90 30 0-110-30-40-100 0M280 930l10 90 0 60M510 1050l-50 60 30 60-10 70-50 60M520 1070l70 40 0 50 40 10 20 60M540 850l90 30 100 10M690 780l-50 90M510 1050l-100 10-20-40M20 960h130M0 500l60 70-30 60-30 20M40 490l-10-140M30 650l30 30M60 1190l100-20 10-60M200 1220v80M200 1220l-80 60M200 1225l100-40 60-20M660 1220l-50-60-110-100M760 1250l20-40 20-10M1000 1070l-60 90-60-20M1100 1100l-60 60-20 60M1260 640l-80 0M1170 660l40 10M1200 670l20 50 30 30M1280 620l-50-90M1300 420l100 30M1290 440l0-100M1400 520l-20 90 40 80M1210 850l30 90M320 600l-60 80-120 20',
    medium: 'M0 310l60 14 20-10 220-14 60-30 80-50 80-30M130 690l20-240-80-120-10-70M0 484l180-4 240 4 30 0M180 455l30 60 20 60 20 20 60 10 80 0 70 50 40 0 60 0 80 0 70 30 120-20 50-10 60 20 50 20h30l80-20 80-10M230 670l220-14M470 680l60 20 60 40 60 30 50 30M640 770l-90 80-70 0-10 40-60 20-50 0-80 20-20 50-10 60-30 30-60 40-80 20M0 1050l110-40 40-40 110-10 60 50 120 10 60 40 130 0 50-30 30-30 60-30M730 880l80 90 50 0 60 50 70 30 30 20 60 70 40 60 40 20M820 965l10 0M1010 1060l50-40 80-40 40-20 50 30M1230 985l60-20 150 0M1010 1060l-40 40-100 40-60 70-80 30M760 180l80 30 130 0 60 70 60 60 60 40M780 90h260l180 0 220 0M720 130l60-34M580 350l-40 20 20-20M620 290l60 40 0 60M530 180v80l20 90-10 50M545 250l40 20 80 50M790 440l-60 20M690 400l-20 60 20 30 0 80-20 20 0 60M800 660l-60 20-10 40M800 660l130-90 20-20M930 580l160-4M1170 300l0 90-10 100 10 90 0 90 30 50 50 40 10 50M1140 490l-40 90M1190 360l10-60M1300 300l-60 60-30 50M1300 360l120 0M1230 430l0 120M1370 120l0 160-20 100 40 120 0 40M1400 520l40 4M1380 540l0 80M1230 270l60 0M1240 980l10 90-60 70-10 80M1260 1230l80-20 100-60M1280 780l90 0M0 690l450-14M640 66l-30 100M560 180l200 0M530 180l-60 30-50 40M1440 860l-20 120M860 960z',
    major: 'M0 180l90 20 10 18h80l80-20 80-20 60-20 80-20 100-10 80-20M0 190l60 10 80 10 60-30 110-10 80 10 60-30 110-10M0 240l80 20 140-10 80-40 100 0 60-40 100-30M350 205l80 10 100-20 60 0 130-20M380 200l80 20 60 0M620 110l20 60 0 180 10 50-20 60-10 10M540 250l0 120-60 90-60 20-80 70-70 50-90 80-90 90-40 40-60 50M0 830l90-90 40-50 100-80M0 900l90-90M410 480l90-10 100 0 140-10 50-30 60-10 110 0 120 6 60-10 110-20 60-40 60-10h130M730 290l60 20 100 10 130 0 40 50 60 60 50 60 30 40 60 40 100 40 80 30M720 190l60 100M755 66l-30 120-10 80 20 80 10 60-30 40 0 60 50 60 0 60 30 40-10 80-10 60-50 60 30 60-50 100-8 130 8 60-6 190M700 310v-80l-10-100M1185 66v240l30 70 0 150 0 0M1215 430l20 100M1340 360l40 80-10 110 20 80-10 100 30 30M1410 750l30 50M0 1215l110 10 60 20M0 1305l200 8 200-4 120-20 90-20 80 10 70-30 260-14 130 20 50 10 120-40M1070 1210l140 30M560 1300l120-40M1170 490l0 80M680 450l60 10 0 30-60 0M1210 1240l0 0M590 130l130 40M650 140l80-10',
    border: 'M1298 66v550l0 734M1250 795l-40 20 10 50 30 50-5 130-60 80-15 100-5 130',
    labels: [['Sandusky', 15, 135], ['Cleveland', 608, 91, 'lg'], ['Parma', 592, 170], ['Strongsville', 527, 244], ['Medina', 516, 379], ['Kent', 806, 369], ['Akron', 713, 420, 'md'], ['Warren', 1120, 302], ['Youngstown', 1220, 407], ['New Cas', 1372, 484], ['East Palestine', 1284, 616], ['Wooster', 470, 639], ['Canton', 796, 642], ['Mansfield', 130, 671], ['Westerville', -8, 1186], ['Newark', 196, 1213], ['Cambridge', 672, 1233], ['St Clairsville', 958, 1222], ['Wheeling', 1180, 1207], ['Steubenville', 1227, 1031], ['Wash', 1407, 1124], ['Zanesville', 520, 1330]],
    dots: [[15, 152], [608, 118], [593, 190], [526, 260], [516, 396], [806, 386], [712, 441], [1120, 322], [1220, 428], [1397, 502], [1284, 632], [468, 656], [796, 662], [131, 691], [196, 1230], [671, 1250], [1072, 1212], [1179, 1224], [1230, 989]],
    interstates: [['90', 393, 155], ['480', 732, 246], ['80', 695, 311], ['80', 1417, 365], ['76', 913, 422], ['71', 476, 492], ['76', 590, 470], ['76', 1419, 657], ['77', 762, 760], ['71', 95, 804], ['70', 364, 1314], ['77', 707, 1324]],
    highways: [['422', 829, 208], ['224', 66, 480], ['250', 184, 480], ['30', 312, 670], ['36', 77, 1007], ['36', 765, 991], ['36', 612, 1055], ['62', 82, 1122], ['22', 807, 1180], ['22', 1298, 969]],
  },
];

const InterstateShield: React.FC<{ x: number; y: number; text: string }> = ({ x, y, text }) => {
  const half = text.length > 2 ? 11 : 8;
  return (
    <g transform={`translate(${x} ${y})`}>
      <path d={`M${-half} -4C${-half - 1} 3 -6 6 0 8.500C6 6 ${half + 1} 3 ${half} -4z`} fill="#4a73c4" />
      <path d={`M${-half} -4.500V-6l1.500 -2l2 1l${half - 3.5} -1.300l${half - 3.5} 1.300l2 -1l1.500 2v1.500z`} fill="#cf5b5b" />
      <path d={`M${-half} -4H${half}`} stroke="#fff" strokeWidth="0.8" />
      <text y="4" textAnchor="middle" className="text-[10px] font-bold" fill="#fff">{text}</text>
    </g>
  );
};

const HighwayShield: React.FC<{ x: number; y: number; text: string }> = ({ x, y, text }) => {
  const half = text.length > 2 ? 10 : 9;
  return (
    <g transform={`translate(${x} ${y})`}>
      <path
        d={`M0 -7C-2 -6 -4 -6 -5 -8C-6 -6.500 -7 -6.500 ${-half} -6C${-half + 1.5} -3 ${-half - 1} 1 ${-half} 4C${-half + 1} 7 -3 6 0 8C3 6 ${half - 1} 7 ${half} 4C${half + 1} 1 ${half - 1.5} -3 ${half} -6C7 -6.500 6 -6.500 5 -8C4 -6 2 -6 0 -7z`}
        fill="#fff"
        stroke="#6b6f73"
        strokeWidth="1.3"
      />
      <text y="4" textAnchor="middle" className="text-[10px] font-medium" fill="#4d5156">{text}</text>
    </g>
  );
};

const labelSizes = {
  sm: 'text-[13px] font-normal',
  md: 'text-[16px] font-medium',
  lg: 'text-[19px] font-medium',
};

const RouteMap: React.FC<{ viewBox: string; className: string }> = ({ viewBox, className }) => (
  <svg viewBox={viewBox} preserveAspectRatio="xMidYMid slice" className={`block font-[Roboto,sans-serif] ${className}`}>
    <rect width="1908" height="428" fill="#b9dcbf" />
    {tiles.map(tile => (
      <g key={tile.x} transform={`translate(${tile.x} ${tile.y}) scale(${tile.sx} ${tile.sy})`} fill="none" strokeLinejoin="round">
        <path d={tile.light} fill="#c4e2cb" />
        <path d={tile.dark} fill="#a9d4b2" />
        <path d={tile.urban} fill="#e7e9ed" />
        <path d={tile.water} fill="#95b2f4" />
        <path d={tile.white} stroke="#f4f9f4" strokeWidth="3" />
        <path d={tile.minor} stroke="#e3b650" strokeWidth="4" />
        <path d={tile.medium} stroke="#ecbf55" strokeWidth="8" />
        <path d={tile.medium} stroke="#fbe08f" strokeWidth="3" />
        <path d={tile.major} stroke="#ecbf4f" strokeWidth="12" />
        <path d={tile.major} stroke="#fdeaa8" strokeWidth="6" />
        <path d={tile.border} stroke="#808a84" strokeWidth="3.5" strokeDasharray="5 7" />
      </g>
    ))}
    {tiles.map(tile => (
      <g key={tile.x}>
        {tile.dots.map(([x, y]) => (
          <circle key={`${x}-${y}`} cx={tile.x + x * tile.sx} cy={tile.y + y * tile.sy} r="2.3" fill="#fff" stroke="#555" strokeWidth="1.2" />
        ))}
        {tile.highways.map(([text, x, y]) => (
          <HighwayShield key={`${x}-${y}`} text={text} x={tile.x + x * tile.sx} y={tile.y + y * tile.sy} />
        ))}
        {tile.interstates.map(([text, x, y]) => (
          <InterstateShield key={`${x}-${y}`} text={text} x={tile.x + x * tile.sx} y={tile.y + y * tile.sy} />
        ))}
        {tile.labels.map(([text, x, y, size]) => (
          <text
            key={text}
            x={tile.x + x * tile.sx}
            y={tile.y + y * tile.sy}
            textAnchor="middle"
            className={labelSizes[size ?? 'sm']}
            fill={size ? '#202124' : '#3c4043'}
            stroke="#fff"
            strokeOpacity="0.75"
            strokeWidth="2.5"
            strokeLinejoin="round"
            paintOrder="stroke"
          >
            {text}
          </text>
        ))}
      </g>
    ))}
    <text transform="translate(5 326) rotate(-52)" className="text-[13px] font-medium" fill="#3f6fd0" stroke="#fff" strokeOpacity="0.5" strokeWidth="2" paintOrder="stroke">s River</text>
    <path d="M954 214c-1.500-7-5-11-10-17-8-11-4-27 10-27s18 16 10 27c-5 6-8.500 10-10 17z" fill="#db4437" stroke="#b93a2e" strokeWidth="0.8" />
    <circle cx="954" cy="188" r="5.5" fill="#a52219" />
  </svg>
);

const googleLetters = [
  ['G', 'text-[#4285f4]'],
  ['o', 'text-[#ea4335]'],
  ['o', 'text-[#fbbc05]'],
  ['g', 'text-[#4285f4]'],
  ['l', 'text-[#34a853]'],
  ['e', 'text-[#ea4335]'],
];

const MapPanel: React.FC = () => (
  <div className="relative overflow-hidden font-[Roboto,sans-serif]">
    <RouteMap viewBox="0 0 1908 428" className="w-full h-[428px]" />
    <div className="absolute left-[11px] top-[11px] flex h-[42px] bg-white rounded-[2px] shadow-[0_1px_4px_rgba(0,0,0,0.3)]">
      <button type="button" className="w-[74px] text-[18px] font-medium text-black border-r border-[#e6e6e6]">Map</button>
      <button type="button" className="w-[105px] text-[18px] text-[#565656]">Satellite</button>
    </div>
    <button type="button" aria-label="Toggle fullscreen view" className="absolute right-[11px] top-[11px] w-[42px] h-[42px] flex items-center justify-center bg-white rounded-[2px] shadow-[0_1px_4px_rgba(0,0,0,0.3)]">
      <svg className="w-5 h-5" viewBox="0 0 20 20" fill="none" stroke="#666" strokeWidth="2.6">
        <path d="M1.300 7V1.300H7M13 1.300h5.700V7M18.700 13v5.700H13M7 18.700H1.300V13" />
      </svg>
    </button>
    <div className="absolute right-[11px] bottom-[26px] w-[42px] flex flex-col gap-[35px]">
      <button type="button" aria-label="Street View" className="h-[42px] flex items-center justify-center bg-white rounded-[2px] shadow-[0_1px_4px_rgba(0,0,0,0.3)]">
        <svg className="w-[18px] h-8" viewBox="0 0 18 32">
          <path d="M4 11h10l2 3 2 8-2 1-2-4v12h-4v-8H8v8H4V19l-2 4-2-1 2-8z" fill="#f2b73f" stroke="#b0803a" strokeWidth="0.6" />
          <path d="M5 10.500h8l-4 5z" fill="#e08a3a" />
          <circle cx="9" cy="5.500" r="5" fill="#f5bd41" stroke="#c98f35" strokeWidth="0.6" />
        </svg>
      </button>
      <div className="flex flex-col px-[5px] bg-white rounded-[2px] shadow-[0_1px_4px_rgba(0,0,0,0.3)]">
        <button type="button" aria-label="Zoom in" className="h-[43px] flex items-center justify-center border-b border-[#e6e6e6]">
          <svg className="w-5 h-5" viewBox="0 0 20 20" stroke="#666" strokeWidth="4"><path d="M10 0v20M0 10h20" /></svg>
        </button>
        <button type="button" aria-label="Zoom out" className="h-[43px] flex items-center justify-center">
          <svg className="w-5 h-5" viewBox="0 0 20 20" stroke="#666" strokeWidth="4"><path d="M0 10h20" /></svg>
        </button>
      </div>
    </div>
    <a href="#google" aria-label="Google" className="absolute left-[11px] bottom-[2px] font-['Open_Sans',sans-serif] text-[18px] leading-[24px] font-medium [text-shadow:0_0_2px_#fff,0_0_2px_#fff]">
      {googleLetters.map(([letter, color], i) => (
        <span key={i} className={color}>{letter}</span>
      ))}
    </a>
    <div className="absolute right-0 bottom-0 flex h-[15px] items-center bg-[#f5f5f5]/75 text-[11px] leading-[15px] text-black">
      <button type="button" className="px-[5px]">Keyboard shortcuts</button>
      <span className="px-[6px]">Map data ©2023 Google</span>
      <a href="#terms" className="px-[5px]">Terms of Use</a>
      <a href="#report" className="px-[6px]">Report a map error</a>
    </div>
  </div>
);

interface StopRowProps {
  id: string;
  dateLabel: string;
  date: string;
  time: string;
  status: string;
  action: string;
  highlighted?: boolean;
  children?: React.ReactNode;
}

const StopRow: React.FC<StopRowProps> = ({ id, dateLabel, date, time, status, action, highlighted, children }) => (
  <div className="grid grid-cols-[2fr_6fr_6fr_5fr_5fr] *:px-4">
    <div className="pt-8">{children}</div>
    <div>
      <Field id={`${id}-date`} label={dateLabel}><TextInput id={`${id}-date`} value={date} /></Field>
    </div>
    <div>
      <Field id={`${id}-time`} label="Time"><Select id={`${id}-time`} options={[time]} /></Field>
    </div>
    <div className="flex pt-8">
      <input id={`${id}-status`} type="checkbox" defaultChecked className="w-[22px] h-[22px] shrink-0 accent-[#2f71f0]" />
      <label htmlFor={`${id}-status`} className="text-[13px] leading-[14px] text-[#333]">{status}</label>
    </div>
    <div className="relative pt-7">
      <button type="button" className="inline-flex items-center h-8 px-[11px] text-[11px] font-medium text-white whitespace-nowrap bg-[#5189b9] border border-[#4a7dab] rounded-[3px]">
        <FaEnvelope className="w-[13px] h-[13px] shrink-0" />
        {action}
      </button>
      {highlighted && <div className="absolute left-0 right-4 top-[15px] h-[60px] bg-[#0ce67d]/40 pointer-events-none" />}
    </div>
  </div>
);

const NotificationModal: React.FC = () => (
  <div className="absolute left-[608px] top-[300px] w-[900px]">
    {/* tinted frame, drawn as a border so the form shows through it only once */}
    <div className="border-t-[32px] border-l-[32px] border-r-[34px] border-b-[36px] border-[#0ce67d]/40">
      <div role="dialog" aria-labelledby="notification-title" className="relative h-[508px] overflow-hidden bg-white text-white">
        <RouteMap viewBox="704 0 475 79" className="absolute inset-x-0 bottom-0 w-full h-[138px]" />
        <div className="absolute inset-0 bg-[#3a475a]/95" />
        <div className="relative flex flex-col items-center pl-10 pt-[90px]">
          <h2 id="notification-title" className="flex items-center gap-4 text-[47px] leading-[60px] font-normal">
            <FaExclamationCircle className="w-[46px] h-[46px]" />
            Notification
          </h2>
          <label htmlFor="cc-emails" className="mt-[78px] mb-[6px] text-[23px] leading-7 font-medium">Would you like to CC any other remails?(enter here)</label>
          <input id="cc-emails" type="text" placeholder="Emails" className="w-[620px] h-16 px-[22px] pb-[3px] bg-white border-2 border-[#d2d6de] text-[24px] text-[#555] placeholder:text-[#999] outline-none" />
          <div className="flex gap-2 mt-14">
            <button type="button" className="w-[188px] h-[79px] pb-[2px] text-[26px] font-medium bg-[#333d4f] rounded-[3px]">Yes</button>
            <button type="button" className="w-[188px] h-[79px] pb-[2px] text-[26px] font-medium bg-[#333d4f] rounded-[3px]">No</button>
          </div>
        </div>
      </div>
    </div>
  </div>
);

const App: React.FC = () => (
  <div className="relative bg-white font-['Noto_Sans_CJK_SC',sans-serif] text-[#333] overflow-x-hidden">
    <div className="h-[13px] border-b border-[#f2f2f2]" />
    <main className="pl-[21px] pr-7">
      <header className="flex items-baseline gap-[10px] h-[76px] pt-[29px]">
        <h1 className="text-[23px] leading-8 font-normal">Manage Route Plan</h1>
        <small className="text-[14px] leading-8 text-[#888]">Edit Route Plan</small>
      </header>

      <section className="border-x border-[#f7f7f7]">
        <div className="-mx-px h-1 rounded-t-[3px] bg-[#57bfec]" />
        <div className="h-[43px] pl-[10px] border-b border-[#f4f4f4]">
          <h2 className="text-[17px] leading-[39px] font-normal text-[#444]">Edit Route Plan</h2>
        </div>

        <form className="px-[10px] pt-[10px]" onSubmit={e => e.preventDefault()}>
          <div className="-mx-4 grid grid-cols-3">
            <div className="col-span-2 grid grid-cols-3 content-start *:px-4">
              <div><Field id="name" label="Internal Name" required><TextInput id="name" disabled /></Field></div>
              <div><Field id="company" label="Company" required><TextInput id="company" disabled /></Field></div>
              <div><Field id="city" label="City" required><TextInput id="city" disabled /></Field></div>
              <div><Field id="zip" label="Zip" required><TextInput id="zip" value="46714" disabled /></Field></div>
              <div><Field id="country" label="Country" required><Select id="country" options={['United States', 'Canada']} disabled /></Field></div>
              <div><Field id="state" label="State" required><Select id="state" options={['Indiana', 'Ohio', 'Illinois']} disabled /></Field></div>
              <div><Field id="address" label="Address"><TextArea id="address" placeholder="Address" disabled /></Field></div>
              <div><Field id="contact" label="Contact"><TextInput id="contact" placeholder="Contact" disabled /></Field></div>
              <div><Field id="phone" label="Phone"><TextInput id="phone" placeholder="Phone" disabled /></Field></div>
              <div><Field id="fax" label="Fax"><TextInput id="fax" placeholder="Fax" disabled /></Field></div>
              <div className="col-span-2 grid grid-cols-2 gap-8">
                <Field id="email" label="Email"><TextInput id="email" placeholder="Email" disabled /></Field>
              </div>
              <div><Field id="receiving" label="Receiving Info"><TextInput id="receiving" placeholder="Receiving Info" disabled /></Field></div>
              <div><Field id="notes" label="Notes"><TextArea id="notes" placeholder="Notes" disabled /></Field></div>
            </div>

            <div>
              <Field id="location" label="Location Pu"><Select id="location" options={['Pickup/Delivery/Switch', 'Pickup', 'Delivery']} /></Field>
              <StopRow id="arrival" dateLabel="Arrival Date Pu" date="2023-12-29" time="10:15" status="Arrived" action="Actual In" highlighted>
                <input type="checkbox" aria-label="Arrival date appointment" className="block w-[22px] h-[22px]" />
              </StopRow>
              <StopRow id="dept" dateLabel="Dept. Date" date="2023-12-29" time="13:45" status="Departed" action="Actual Out" />
              <div className="px-4">
                <Field id="notes-pu" label="Notes Pu"><TextArea id="notes-pu" /></Field>
                <div className="mt-[59px]">
                  <Field id="currency-pu" label="Currency Pu"><Select id="currency-pu" options={['']} /></Field>
                </div>
                <Field id="unit-pu" label="Unit Pu"><Select id="unit-pu" options={['']} /></Field>
                <Field id="quantity-pu" label="Quantity Pu"><TextInput id="quantity-pu" /></Field>
                <Field id="rate-pu" label="Unit Rate Pu"><TextInput id="rate-pu" value="0" /></Field>
              </div>
              <div className="grid grid-cols-[1fr_3fr] mb-[18px] *:px-4">
                <div>
                  <button type="button" id="cad-total-button" className="h-8 px-[10px] text-[12px] text-[#444] whitespace-nowrap bg-[#f4f4f4] border border-[#ddd] rounded-[3px]">CAD Total</button>
                </div>
                <div>
                  <input type="text" aria-labelledby="cad-total-button" defaultValue="0" readOnly className={`${controlClass} h-9 px-[13px] bg-[#eee]`} />
                </div>
              </div>
            </div>
          </div>

          <MapPanel />

          <div className="-mx-[10px] mt-8 flex gap-1 border-t border-[#f0f0f0] pl-[10px] pt-[10px] pb-[6px] text-[13px] text-white">
            <button type="submit" className="flex items-center gap-[6px] h-9 pl-[15px] pr-3 font-medium bg-[#5189b9] border border-[#4a7dab]">
              <FaRegSave className="w-[13px] h-[14px]" />
              Submit
            </button>
            <button type="button" className="flex items-center gap-[6px] h-9 pl-[15px] pr-3 font-medium bg-[#e8a23d] border border-[#df9a36]">
              <FaChevronCircleLeft className="w-[13px] h-[13px]" />
              Back
            </button>
          </div>
        </form>
      </section>
    </main>
    <NotificationModal />
  </div>
);

export default App;
